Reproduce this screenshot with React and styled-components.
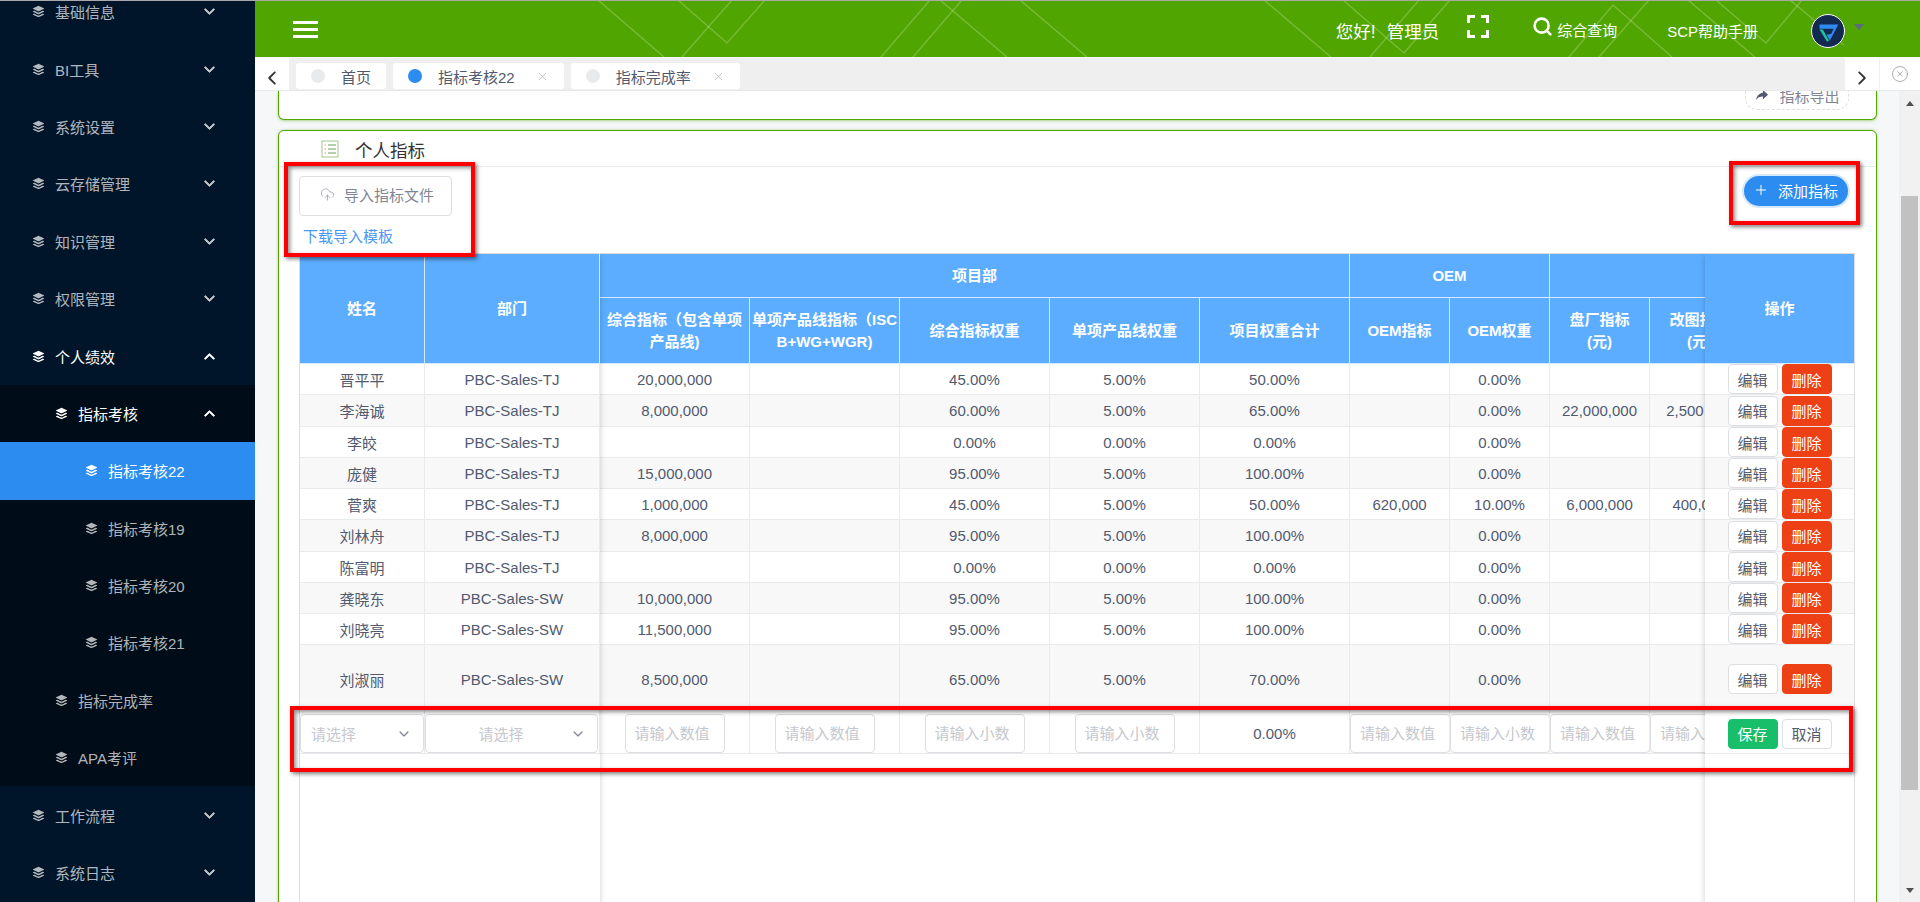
import React from "react";
import styled, { createGlobalStyle } from "styled-components";
import { IoLogoBuffer } from "react-icons/io5";
import { IoIosArrowDown, IoIosArrowUp, IoIosArrowBack, IoIosArrowForward, IoMdShareAlt } from "react-icons/io";
import { CircleX, CloudUpload, Plus, Search, X } from "lucide-react";

const FONT = `"Liberation Sans", "Noto Sans CJK SC", sans-serif`;

const MENU = [
  { label: "基础信息", level: 1, arrow: "down" },
  { label: "BI工具", level: 1, arrow: "down" },
  { label: "系统设置", level: 1, arrow: "down" },
  { label: "云存储管理", level: 1, arrow: "down" },
  { label: "知识管理", level: 1, arrow: "down" },
  { label: "权限管理", level: 1, arrow: "down" },
  { label: "个人绩效", level: 1, arrow: "up", open: true },
  { label: "指标考核", level: 2, arrow: "up", open: true },
  { label: "指标考核22", level: 3, active: true },
  { label: "指标考核19", level: 3 },
  { label: "指标考核20", level: 3 },
  { label: "指标考核21", level: 3 },
  { label: "指标完成率", level: 2 },
  { label: "APA考评", level: 2 },
  { label: "工作流程", level: 1, arrow: "down" },
  { label: "系统日志", level: 1, arrow: "down" },
];

const LATTICE = [
  "598,0 664,57",
  "678,0 727,43 765,0",
  "732,0 682,57",
  "930,0 881,57",
  "962,0 913,57",
  "940,0 1007,57",
  "1020,0 1087,57",
  "1264,0 1331,57",
  "1343,0 1404,53 1450,0",
  "1419,0 1370,57",
  "1569,57 1613,5 1672,57",
  "1649,0 1599,57",
  "1716,0 1766,43 1802,0",
  "1688,0 1755,57",
  "1790,0 1844,45",
];

const TABS = [
  { label: "首页" },
  { label: "指标考核22", active: true, close: true },
  { label: "指标完成率", close: true },
];

const COLS = [125, 175, 150, 150, 150, 150, 150, 100, 100, 100, 100, 149];

const SUB_HEADERS = [
  "综合指标（包含单项\n产品线)",
  "单项产品线指标（ISC\nB+WG+WGR)",
  "综合指标权重",
  "单项产品线权重",
  "项目权重合计",
  "OEM指标",
  "OEM权重",
  "盘厂指标\n(元)",
  "改图指标\n(元)",
];

const ROWS = [
  { h: 31, cells: ["晋平平", "PBC-Sales-TJ", "20,000,000", "", "45.00%", "5.00%", "50.00%", "", "0.00%", "", ""] },
  { h: 32, cells: ["李海诚", "PBC-Sales-TJ", "8,000,000", "", "60.00%", "5.00%", "65.00%", "", "0.00%", "22,000,000", "2,500,000"] },
  { h: 31, cells: ["李皎", "PBC-Sales-TJ", "", "", "0.00%", "0.00%", "0.00%", "", "0.00%", "", ""] },
  { h: 31, cells: ["庞健", "PBC-Sales-TJ", "15,000,000", "", "95.00%", "5.00%", "100.00%", "", "0.00%", "", ""] },
  { h: 31, cells: ["菅爽", "PBC-Sales-TJ", "1,000,000", "", "45.00%", "5.00%", "50.00%", "620,000", "10.00%", "6,000,000", "400,000"] },
  { h: 32, cells: ["刘林舟", "PBC-Sales-TJ", "8,000,000", "", "95.00%", "5.00%", "100.00%", "", "0.00%", "", ""] },
  { h: 31, cells: ["陈富明", "PBC-Sales-TJ", "", "", "0.00%", "0.00%", "0.00%", "", "0.00%", "", ""] },
  { h: 31, cells: ["龚晓东", "PBC-Sales-SW", "10,000,000", "", "95.00%", "5.00%", "100.00%", "", "0.00%", "", ""] },
  { h: 31, cells: ["刘晓亮", "PBC-Sales-SW", "11,500,000", "", "95.00%", "5.00%", "100.00%", "", "0.00%", "", ""] },
  { h: 63, tall: true, cells: ["刘淑丽", "PBC-Sales-SW", "8,500,000", "", "65.00%", "5.00%", "70.00%", "", "0.00%", "", ""] },
];

const App = () => {
  return (
    <Shell>
      <GlobalStyle />
      <Sidebar>
        <SideList>
          {MENU.map((item) => (
            <SideItem key={item.label} $level={item.level} $open={item.open} $active={item.active}>
              <SideIcon>
                <IoLogoBuffer />
              </SideIcon>
              <span>{item.label}</span>
              {item.arrow && <SideArrow>{item.arrow === "up" ? <IoIosArrowUp /> : <IoIosArrowDown />}</SideArrow>}
            </SideItem>
          ))}
        </SideList>
      </Sidebar>

      <Main>
        <Header>
          <Lattice viewBox="255 0 1665 57" preserveAspectRatio="none">
            {LATTICE.map((points) => (
              <polyline key={points} points={points} />
            ))}
          </Lattice>
          <Burger>
            <i />
            <i />
            <i />
          </Burger>
          <HeaderRight>
            <Greeting>
              <span>您好!</span>
              <span>管理员</span>
            </Greeting>
            <FullScreen viewBox="0 0 22 23">
              <path d="M1.5 8V1.5H8M14 1.5h6.5V8M20.5 15v6.5H14M8 21.5H1.5V15" />
            </FullScreen>
            <QueryLink>
              <Search size={21} strokeWidth={3} />
              <span>综合查询</span>
            </QueryLink>
            <HelpLink>SCP帮助手册</HelpLink>
            <Avatar>
              <svg viewBox="0 0 34 34" width="32" height="32">
                <path d="M8 10h20L19 27l-3.5-6 5-1 2.5-5.5H8z" fill="#2d8cf0" />
                <path d="M8 15.5h3.5L18 27l-2 1.5z" fill="#19c6a0" />
              </svg>
            </Avatar>
            <Caret />
          </HeaderRight>
        </Header>

        <TabBar>
          <TabArrow>
            <IoIosArrowBack />
          </TabArrow>
          <TabTrack>
            {TABS.map((tab) => (
              <Tab key={tab.label}>
                <TabDot $active={tab.active} />
                <span>{tab.label}</span>
                {tab.close && (
                  <TabClose>
                    <X size={13} strokeWidth={1} />
                  </TabClose>
                )}
              </Tab>
            ))}
          </TabTrack>
          <TabArrow>
            <IoIosArrowForward />
          </TabArrow>
          <TabCloseAll>
            <CircleX size={18} strokeWidth={0.9} />
          </TabCloseAll>
        </TabBar>

        <Body>
          <Content>
            <ExportCard>
              <ExportButton>
                <IoMdShareAlt />
                <span>指标导出</span>
              </ExportButton>
            </ExportCard>

            <Card>
              <CardTitle>
                <svg width="18" height="18" viewBox="0 0 18 18" fill="none">
                  <rect x="1" y="1" width="16" height="16" stroke="#a6c48a" />
                  <path d="M3.5 5h1.5M3.5 9h1.5M3.5 13h1.5" stroke="#d2a15f" />
                  <path d="M7 5h8M7 9h8M7 13h8" stroke="#6f9d58" />
                </svg>
                <span>个人指标</span>
              </CardTitle>

              <CardBody>
                <Toolbar>
                  <ImportGroup>
                    <ImportButton>
                      <CloudUpload size={15} strokeWidth={1} />
                      <span>导入指标文件</span>
                    </ImportButton>
                    <TemplateLink>下载导入模板</TemplateLink>
                  </ImportGroup>
                  <AddButton>
                    <Plus size={16} strokeWidth={1.5} />
                    <span>添加指标</span>
                  </AddButton>
                </Toolbar>

                <TableWrap>
                  <Table>
                    <colgroup>
                      {COLS.map((width, index) => (
                        <col key={index} width={width} />
                      ))}
                    </colgroup>
                    <thead>
                      <GroupRow>
                        <Th rowSpan={2}>姓名</Th>
                        <Th rowSpan={2}>部门</Th>
                        <Th colSpan={5}>项目部</Th>
                        <Th colSpan={2}>OEM</Th>
                        <Th colSpan={2} />
                        <OpTh rowSpan={2}>操作</OpTh>
                      </GroupRow>
                      <SubRow>
                        {SUB_HEADERS.map((label) => (
                          <Th key={label}>{label}</Th>
                        ))}
                      </SubRow>
                    </thead>
                    <tbody>
                      {ROWS.map((row, index) => (
                        <DataRow key={row.cells[0]} $h={row.h} $even={index % 2 === 1} $tall={row.tall}>
                          {row.cells.map((value, i) => (
                            <Td key={i}>{value}</Td>
                          ))}
                          <OpTd>
                            <OpButtons>
                              <OpButton>编辑</OpButton>
                              <OpButton $color="#ed4014">删除</OpButton>
                            </OpButtons>
                          </OpTd>
                        </DataRow>
                      ))}
                      <EditRow>
                        <Td>
                          <SelectBox $width={124}>
                            <SelectText>请选择</SelectText>
                            <IoIosArrowDown />
                          </SelectBox>
                        </Td>
                        <Td>
                          <SelectBox $width={173} $center>
                            <SelectText>请选择</SelectText>
                            <IoIosArrowDown />
                          </SelectBox>
                        </Td>
                        <Td><NumberInput readOnly placeholder="请输入数值" /></Td>
                        <Td><NumberInput readOnly placeholder="请输入数值" /></Td>
                        <Td><NumberInput readOnly placeholder="请输入小数" /></Td>
                        <Td><NumberInput readOnly placeholder="请输入小数" /></Td>
                        <Td>0.00%</Td>
                        <Td><NumberInput readOnly placeholder="请输入数值" /></Td>
                        <Td><NumberInput readOnly placeholder="请输入小数" /></Td>
                        <Td><NumberInput readOnly placeholder="请输入数值" /></Td>
                        <Td><NumberInput readOnly placeholder="请输入数值" /></Td>
                        <OpTd>
                          <OpButtons>
                            <OpButton $color="#19be6b">保存</OpButton>
                            <OpButton>取消</OpButton>
                          </OpButtons>
                        </OpTd>
                      </EditRow>
                    </tbody>
                  </Table>
                  <FixedLeftEdge />
                  <FixedRightEdge />
                </TableWrap>
              </CardBody>
            </Card>
          </Content>

          <Rail>
            <RailUp />
            <RailThumb />
            <RailDown />
          </Rail>
        </Body>
      </Main>

      <Callout $x={284} $y={162} $w={191} $h={95} />
      <Callout $x={1729} $y={161} $w={131} $h={64} />
      <Callout $x={290} $y={706} $w={1563} $h={66} />
    </Shell>
  );
};

export default App;

const GlobalStyle = createGlobalStyle`
  * {
    box-sizing: border-box;
  }
  html,
  body {
    margin: 0;
    height: 100%;
    overflow: hidden;
    font-family: ${FONT};
    font-size: 15px;
    color: #515a6e;
  }
`;

const Shell = styled.div`
  position: relative;
  display: flex;
  width: 100%;
  height: 100vh;
  overflow: hidden;
  border-top: 1px solid #a9a9a9;
  background: #f5f7f9;
`;

const Sidebar = styled.aside`
  flex: 0 0 255px;
  height: 100%;
  overflow: hidden;
  background: #001529;
`;

const SideList = styled.div`
  margin-top: -18px;
`;

const SideItem = styled.div`
  display: flex;
  align-items: center;
  height: 57.4px;
  padding-left: ${(p) => (p.$level === 1 ? 32 : p.$level === 2 ? 55 : 85)}px;
  padding-right: 38px;
  font-size: 15px;
  color: ${(p) => (p.$open || p.$active ? "#fff" : "rgba(255, 255, 255, 0.7)")};
  background: ${(p) => (p.$active ? "#2d8cf0" : p.$level > 1 ? "#000c17" : "transparent")};
`;

const SideIcon = styled.span`
  display: flex;
  width: 14px;
  margin-right: 9px;
  font-size: 13px;
`;

const SideArrow = styled.span`
  display: flex;
  margin-left: auto;
  font-size: 15px;
  svg {
    stroke-width: 28;
  }
`;

const Main = styled.div`
  display: flex;
  flex: 1;
  flex-direction: column;
  min-width: 0;
  height: 100%;
`;

const Header = styled.header`
  position: relative;
  flex: 0 0 56px;
  display: flex;
  align-items: center;
  justify-content: space-between;
  padding: 0 56px 0 38px;
  background: #50a500;
  color: #fff;
`;

const Lattice = styled.svg`
  position: absolute;
  top: -1px;
  left: 0;
  width: 100%;
  height: 57px;
  fill: none;
  stroke: rgba(255, 255, 255, 0.22);
  stroke-width: 1.5;
`;

const Burger = styled.div`
  position: relative;
  display: flex;
  flex-direction: column;
  gap: 4px;
  width: 25px;
  i {
    display: block;
    height: 3px;
    background: #fff;
  }
`;

const HeaderRight = styled.div`
  position: relative;
  display: flex;
  align-items: center;
`;

const Greeting = styled.div`
  display: flex;
  gap: 11px;
  font-size: 17.5px;
  padding-top: 2px;
`;

const FullScreen = styled.svg`
  width: 22px;
  height: 23px;
  margin: 0 0 6px 28px;
  fill: none;
  stroke: #fff;
  stroke-width: 3;
`;

const QueryLink = styled.div`
  display: flex;
  align-items: center;
  gap: 4px;
  margin-left: 43px;
  font-size: 15px;
  svg {
    margin-bottom: 5px;
  }
  span {
    padding-top: 1px;
  }
`;

const HelpLink = styled.div`
  margin-left: 50px;
  font-size: 15px;
  padding-top: 2px;
`;

const Avatar = styled.div`
  display: flex;
  align-items: center;
  justify-content: center;
  width: 34px;
  height: 34px;
  margin: 3px 0 0 53px;
  border: 1px solid #fff;
  border-radius: 50%;
  background: #14294f;
`;

const Caret = styled.div`
  width: 0;
  height: 0;
  margin: 0 0 5px 9px;
  border-top: 6px solid #5c6b80;
  border-left: 5.5px solid transparent;
  border-right: 5.5px solid transparent;
`;

const TabBar = styled.div`
  flex: 0 0 33px;
  display: flex;
  margin-top: 1px;
  background: #fff;
  border-bottom: 1px solid #e8e8e8;
  z-index: 2;
`;

const TabArrow = styled.div`
  flex: 0 0 34px;
  display: flex;
  align-items: center;
  justify-content: center;
  font-size: 20px;
  color: #333;
  padding-top: 7px;
  background: #fff;
`;

const TabTrack = styled.div`
  flex: 1;
  display: flex;
  gap: 7px;
  padding: 5px 0 0 7px;
  background: #efefef;
`;

const Tab = styled.div`
  display: flex;
  align-items: center;
  gap: 16px;
  height: 26px;
  padding: 0 15px;
  border-radius: 3px;
  background: #fff;
  color: #515a6e;
  font-size: 15px;
`;

const TabDot = styled.i`
  display: block;
  width: 14px;
  height: 14px;
  border-radius: 50%;
  background: ${(p) => (p.$active ? "#2d8cf0" : "#e8eaec")};
`;

const TabClose = styled.span`
  display: flex;
  margin-left: 5px;
  color: #999;
`;

const TabCloseAll = styled.div`
  flex: 0 0 41px;
  display: flex;
  align-items: center;
  justify-content: center;
  color: #888;
  background: #fff;
  border-left: 1px solid #efefef;
`;

const Body = styled.div`
  flex: 1;
  display: flex;
  min-height: 0;
`;

const Content = styled.main`
  flex: 1;
  min-width: 0;
  padding: 0 22px 0 23px;
  overflow: hidden;
`;

const ExportCard = styled.section`
  display: flex;
  align-items: flex-end;
  justify-content: flex-end;
  height: 29px;
  padding: 0 27px 9px 0;
  overflow: hidden;
  background: #fff;
  border: 1px solid #52a600;
  border-top: none;
  border-radius: 0 0 6px 6px;
  box-shadow: 0 1px 3px rgba(82, 166, 0, 0.45);
`;

const ExportButton = styled.div`
  flex: 0 0 auto;
  display: flex;
  align-items: center;
  justify-content: center;
  gap: 9px;
  width: 104px;
  height: 30px;
  border: 1px dashed #dcdee2;
  border-radius: 12px;
  color: #808695;
  font-size: 15px;
  svg {
    font-size: 16px;
    color: #515a6e;
  }
`;

const Card = styled.section`
  height: 800px;
  margin-top: 10px;
  background: #fff;
  border: 1px solid #52a600;
  border-radius: 6px;
  box-shadow: 0 0 3px rgba(82, 166, 0, 0.45);
`;

const CardTitle = styled.div`
  display: flex;
  align-items: center;
  gap: 16px;
  height: 36px;
  padding-left: 42px;
  border-bottom: 1px solid #e8eaec;
  font-size: 17.5px;
  color: #333;
  span {
    padding-top: 2px;
  }
`;

const CardBody = styled.div`
  padding: 9px 21px 0 20px;
`;

const Toolbar = styled.div`
  display: flex;
  justify-content: space-between;
  align-items: flex-start;
  height: 77px;
  padding-right: 7px;
`;

const ImportGroup = styled.div`
  display: flex;
  flex-direction: column;
`;

const ImportButton = styled.div`
  display: flex;
  align-items: center;
  gap: 9px;
  width: 153px;
  height: 40px;
  padding: 0 0 3px 20px;
  border: 1px solid #dcdee2;
  border-radius: 4px;
  color: #808695;
  font-size: 15px;
`;

const TemplateLink = styled.a`
  margin: 11px 0 0 4px;
  color: #4c97f0;
  font-size: 15px;
  line-height: 20px;
`;

const AddButton = styled.div`
  display: flex;
  align-items: center;
  gap: 9px;
  width: 104px;
  height: 30px;
  padding: 0 0 2px 9px;
  border-radius: 15px;
  background: #2d8cf0;
  box-shadow: 0 0 0 2px rgba(45, 140, 240, 0.2);
  color: #fff;
  font-size: 15px;
`;

const TableWrap = styled.div`
  position: relative;
  height: 700px;
  overflow: hidden;
  border: 1px solid #dcdee2;
  border-bottom: none;
`;

const Table = styled.table`
  width: 1599px;
  table-layout: fixed;
  border-collapse: separate;
  border-spacing: 0;
`;

const GroupRow = styled.tr`
  height: 44px;
`;

const SubRow = styled.tr`
  height: 66px;
`;

const Th = styled.th`
  padding: 0;
  background: #5cadff;
  border-right: 1px solid rgba(255, 255, 255, 0.75);
  border-bottom: 1px solid rgba(255, 255, 255, 0.75);
  color: #fff;
  font-size: 15px;
  font-weight: bold;
  line-height: 22px;
  text-align: center;
  white-space: pre-line;
`;

const OpTh = styled(Th)`
  position: sticky;
  right: 0;
  z-index: 2;
  border-right: none;
`;

const Td = styled.td`
  padding: 0;
  border-right: 1px solid #e8eaec;
  border-bottom: 1px solid #e8eaec;
  text-align: center;
  white-space: nowrap;
  overflow: hidden;
`;

const OpTd = styled(Td)`
  position: sticky;
  right: 0;
  z-index: 2;
  border-right: none;
`;

const DataRow = styled.tr`
  height: ${(p) => p.$h}px;
  ${Td} {
    padding-top: ${(p) => (p.$tall ? 6 : 0)}px;
    background: ${(p) => (p.$even ? "#f8f8f9" : "#fff")};
  }
`;

const EditRow = styled.tr`
  height: 46px;
  ${Td} {
    padding-top: 6px;
    background: #fff;
  }
`;

const OpButtons = styled.div`
  display: flex;
  justify-content: center;
  gap: 4px;
`;

const OpButton = styled.div`
  display: flex;
  align-items: center;
  justify-content: center;
  width: 50px;
  height: 30px;
  border: 1px solid ${(p) => p.$color || "#dcdee2"};
  border-radius: 4px;
  background: ${(p) => p.$color || "#fff"};
  color: ${(p) => (p.$color ? "#fff" : "#515a6e")};
  font-size: 15px;
`;

const SelectBox = styled.div`
  position: relative;
  display: flex;
  align-items: center;
  justify-content: ${(p) => (p.$center ? "center" : "flex-start")};
  width: ${(p) => p.$width}px;
  height: 39px;
  margin-left: 0;
  padding: 0 ${(p) => (p.$center ? 31 : 10)}px 0 10px;
  border: 1px solid #dcdee2;
  border-radius: 4px;
  background: #fff;
  svg {
    position: absolute;
    right: 12px;
    top: 12px;
    color: #808695;
    font-size: 14px;
  }
`;

const SelectText = styled.span`
  color: #c5c8ce;
  font-size: 15px;
`;

const NumberInput = styled.input`
  display: block;
  width: 100px;
  height: 39px;
  margin: 0 auto;
  padding: 0 9px;
  border: 1px solid #dcdee2;
  border-radius: 4px;
  background: #fff;
  font-family: ${FONT};
  font-size: 15px;
  outline: none;
  &::placeholder {
    color: #c5c8ce;
    opacity: 1;
  }
`;

const FixedLeftEdge = styled.div`
  position: absolute;
  top: 0;
  bottom: 0;
  left: 0;
  width: 300px;
  z-index: 3;
  pointer-events: none;
  box-shadow: 2px 0 6px -2px rgba(0, 0, 0, 0.2);
`;

const FixedRightEdge = styled.div`
  position: absolute;
  top: 0;
  bottom: 0;
  right: 0;
  width: 149px;
  z-index: 3;
  pointer-events: none;
  box-shadow: -2px 0 6px -2px rgba(0, 0, 0, 0.2);
`;

const Rail = styled.div`
  flex: 0 0 21px;
  display: flex;
  flex-direction: column;
  align-items: center;
  padding-top: 10px;
  background: #f1f1f1;
`;

const RailUp = styled.i`
  width: 0;
  height: 0;
  border-bottom: 5px solid #505050;
  border-left: 4.5px solid transparent;
  border-right: 4.5px solid transparent;
`;

const RailThumb = styled.div`
  width: 17px;
  height: 594px;
  margin-top: 90px;
  background: #c1c1c1;
`;

const RailDown = styled.i`
  width: 0;
  height: 0;
  margin-top: 98px;
  border-top: 5px solid #505050;
  border-left: 4.5px solid transparent;
  border-right: 4.5px solid transparent;
`;

const Callout = styled.div`
  position: absolute;
  top: ${(p) => p.$y - 1}px;
  left: ${(p) => p.$x}px;
  width: ${(p) => p.$w}px;
  height: ${(p) => p.$h}px;
  z-index: 5;
  pointer-events: none;
  border: 4px solid #f00;
  box-shadow: 2px 2px 4px rgba(0, 0, 0, 0.5), inset 2px 2px 4px rgba(0, 0, 0, 0.45);
`;
